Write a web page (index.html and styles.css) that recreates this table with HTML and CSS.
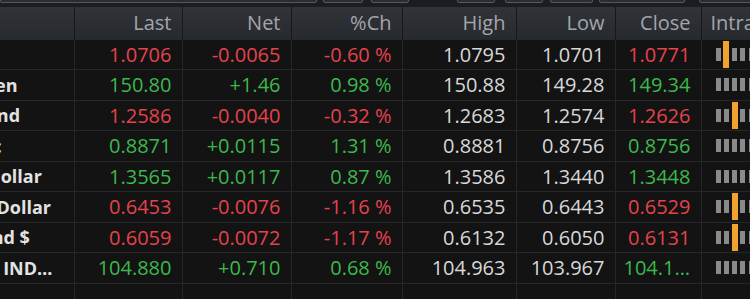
FILE: index.html
```html
<!DOCTYPE html>
<html lang="en">
<head>
<meta charset="utf-8">
<title>FX Quotes</title>
<link rel="stylesheet" href="styles.css">
</head>
<body>
<div class="toolbar">
  <span class="tb tb-1"></span>
  <span class="tb tb-2"></span>
  <span class="tb tb-3"></span>
  <span class="tb tb-4"></span>
  <span class="tb tb-5"></span>
  <span class="tb tb-6"></span>
  <span class="tb tb-7"></span>
  <span class="tb tb-8"></span>
</div>
<div class="viewport">
<table class="quotes">
  <colgroup>
    <col class="c-name"><col class="c-last"><col class="c-net"><col class="c-pct"><col class="c-high"><col class="c-low"><col class="c-close"><col class="c-intra">
  </colgroup>
  <thead>
    <tr><th class="name">Name</th><th>Last</th><th>Net</th><th>%Ch</th><th>High</th><th>Low</th><th>Close</th><th class="intra">Intraday</th></tr>
  </thead>
  <tbody>
    <tr><td class="name">Euro</td><td class="dn">1.0706</td><td class="dn">-0.0065</td><td class="dn">-0.60 %</td><td>1.0795</td><td>1.0701</td><td class="dn">1.0771</td>
      <td class="intra"><div class="bars"><i></i><b></b><i></i><i></i><i></i><i></i><i></i><i></i><i></i><i></i></div></td></tr>
    <tr><td class="name">Japanese Yen</td><td class="up">150.80</td><td class="up">+1.46</td><td class="up">0.98 %</td><td>150.88</td><td>149.28</td><td class="up">149.34</td>
      <td class="intra"><div class="bars"><i></i><i></i><i></i><i></i><i></i><i></i><i></i><i></i><i></i><b></b></div></td></tr>
    <tr><td class="name">British Pound</td><td class="dn">1.2586</td><td class="dn">-0.0040</td><td class="dn">-0.32 %</td><td>1.2683</td><td>1.2574</td><td class="dn">1.2626</td>
      <td class="intra"><div class="bars"><i></i><i></i><b></b><i></i><i></i><i></i><i></i><i></i><i></i><i></i></div></td></tr>
    <tr><td class="name">Swiss Franc</td><td class="up">0.8871</td><td class="up">+0.0115</td><td class="up">1.31 %</td><td>0.8881</td><td>0.8756</td><td class="up">0.8756</td>
      <td class="intra"><div class="bars"><i></i><i></i><i></i><i></i><i></i><i></i><i></i><i></i><i></i><b></b></div></td></tr>
    <tr><td class="name">Canadian Dollar</td><td class="up">1.3565</td><td class="up">+0.0117</td><td class="up">0.87 %</td><td>1.3586</td><td>1.3440</td><td class="up">1.3448</td>
      <td class="intra"><div class="bars"><i></i><i></i><i></i><i></i><i></i><i></i><i></i><i></i><b></b><i></i></div></td></tr>
    <tr><td class="name">Australian Dollar</td><td class="dn">0.6453</td><td class="dn">-0.0076</td><td class="dn">-1.16 %</td><td>0.6535</td><td>0.6443</td><td class="dn">0.6529</td>
      <td class="intra"><div class="bars"><i></i><i></i><b></b><i></i><i></i><i></i><i></i><i></i><i></i><i></i></div></td></tr>
    <tr><td class="name">New Zealand $</td><td class="dn">0.6059</td><td class="dn">-0.0072</td><td class="dn">-1.17 %</td><td>0.6132</td><td>0.6050</td><td class="dn">0.6131</td>
      <td class="intra"><div class="bars"><i></i><i></i><b></b><i></i><i></i><i></i><i></i><i></i><i></i><i></i></div></td></tr>
    <tr><td class="name">US DOLLAR INDEX</td><td class="up">104.880</td><td class="up">+0.710</td><td class="up">0.68 %</td><td>104.963</td><td>103.967</td><td class="up">104.188</td>
      <td class="intra"><div class="bars"><i></i><i></i><i></i><i></i><i></i><i></i><i></i><i></i><i></i><b></b></div></td></tr>
    <tr class="empty"><td class="name"></td><td></td><td></td><td></td><td></td><td></td><td></td><td class="intra"></td></tr>
  </tbody>
</table>
</div>
</body>
</html>
```

FILE: styles.css
```css
html, body {
  margin: 0;
  padding: 0;
}
body {
  width: 750px;
  height: 299px;
  overflow: hidden;
  background: #131313;
  font-family: "Open Sans", "Liberation Sans", sans-serif;
}

/* top toolbar, mostly scrolled out of view */
.toolbar {
  display: flex;
  align-items: flex-start;
  height: 7px;
  background: #1c1d20;
  overflow: hidden;
}
.tb {
  flex: none;
  box-sizing: border-box;
  height: 16px;
  margin-top: -13px;
  border: 1px solid #55585c;
  border-radius: 2px;
  background: #2a2c30;
}
.tb-1 { width: 317px; }
.tb-2 { width: 40px; margin-left: 6px; }
.tb-3 { width: 38px; margin-left: 8px; }
.tb-4 { width: 38px; margin-left: 48px; }
.tb-5 { width: 38px; margin-left: 10px; }
.tb-6 { width: 43px; margin-left: 7px; }
.tb-7 { width: 86px; margin-left: 6px; }
.tb-8 { width: 80px; margin-left: 14px; }

/* table, horizontally scrolled */
.viewport {
  overflow: hidden;
  height: 292px;
}
.quotes {
  margin-left: -126px;
  border-collapse: collapse;
  table-layout: fixed;
  width: 847px;
  font-size: 20px;
}
.c-name { width: 200px; }
.c-last { width: 108px; }
.c-net { width: 109px; }
.c-pct { width: 111px; }
.c-high { width: 114px; }
.c-low { width: 99px; }
.c-close { width: 86px; }
.c-intra { width: 120px; }

.quotes th {
  height: 32px;
  padding: 0 10px 0 0;
  box-sizing: border-box;
  background: linear-gradient(#303338, #272a2e);
  border-left: 1px solid #17181a;
  color: #a2a6ab;
  font-size: 20px;
  font-weight: 500;
  text-align: right;
  white-space: nowrap;
  overflow: hidden;
}
.quotes th.name {
  color: transparent;
  border-left: none;
}
.quotes th.intra {
  text-align: left;
  padding: 0 0 0 9px;
}

.quotes td {
  height: 30.5px;
  padding: 0 10px 0 8px;
  box-sizing: border-box;
  border-left: 1px solid #272727;
  border-top: 1px solid #272727;
  color: #d8d8d8;
  font-weight: 500;
  text-align: right;
  white-space: nowrap;
  overflow: hidden;
  text-overflow: ellipsis;
}
.quotes td.name {
  border-left: none;
  text-align: left;
  padding: 0 16px 0 24px;
  font-size: 18px;
  font-weight: 700;
  color: #e2e2e2;
}
.quotes td.up { color: #3db84c; }
.quotes td.dn { color: #e5424c; }
.quotes td.intra {
  text-align: left;
  padding: 0 0 0 14px;
}

.bars {
  display: flex;
  align-items: center;
  gap: 3.3px;
  height: 28px;
}
.bars i {
  flex: none;
  width: 5px;
  height: 13px;
  background: #8a8a8a;
}
.bars b {
  flex: none;
  width: 6px;
  height: 27px;
  margin: 0 -0.5px;
  background: #f2a22e;
}
```
